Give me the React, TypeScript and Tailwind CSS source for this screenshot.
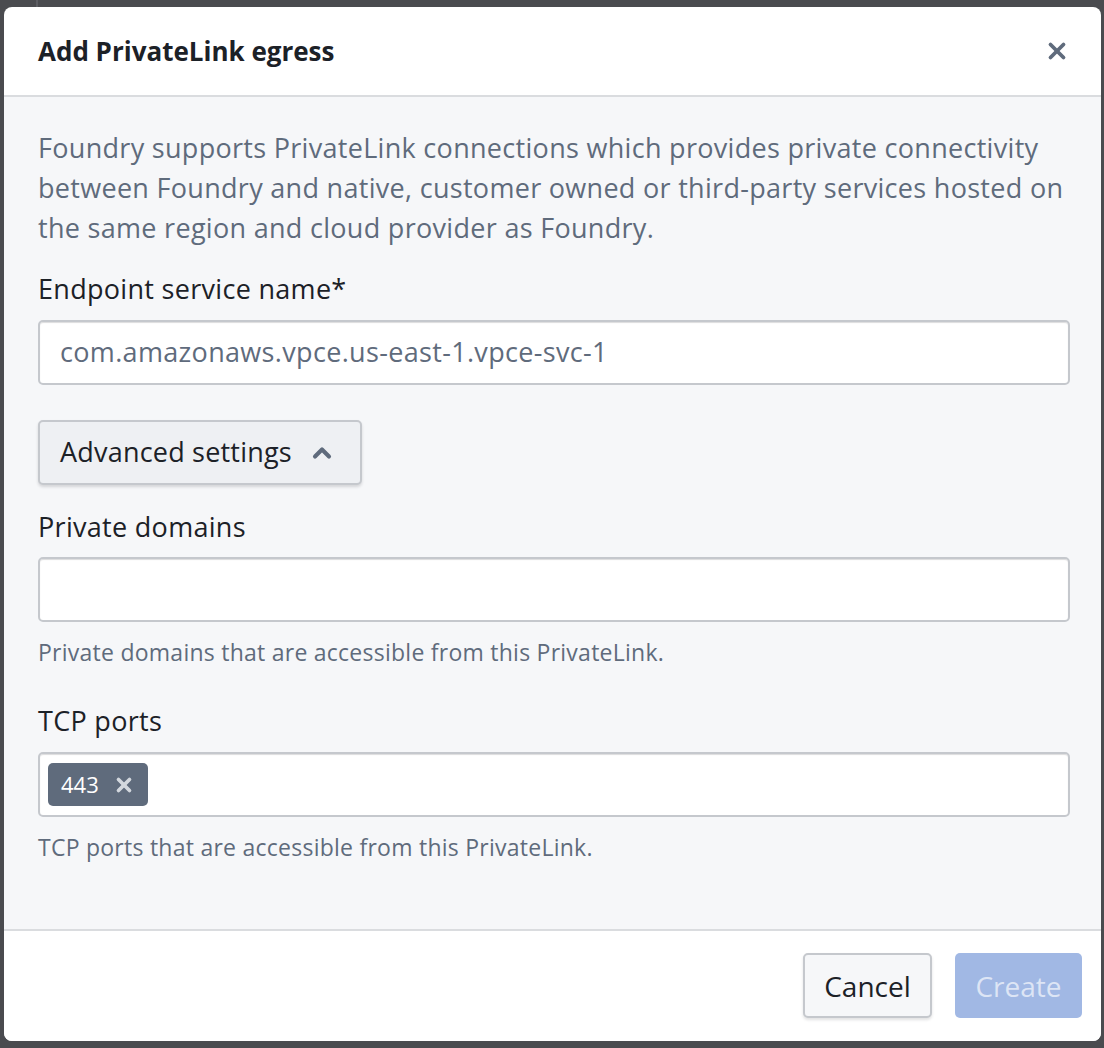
/* Add PrivateLink egress dialog */
import { ChevronUp, X } from "lucide-react";

const font = { fontFamily: "'Open Sans', 'Noto Sans', sans-serif" };

function Label({ children }: { children: React.ReactNode }) {
  return <div className="text-[27px] leading-[40px] tracking-[0.3px] text-[#1c2127]">{children}</div>;
}

function Helper({ children }: { children: React.ReactNode }) {
  return <div className="mt-[15px] text-[23px] leading-[30px] tracking-[0.25px] text-[#5f6b7c]">{children}</div>;
}

const inputBox =
  "h-[65px] w-full rounded-[5px] border-2 border-[#c5c8cd] bg-white shadow-[inset_0_1px_1px_rgba(17,20,24,0.15)]";

export default function App() {
  return (
    <div className="relative h-[1048px] w-[1104px] overflow-hidden bg-[#4a4b4f]" style={font}>
      <div className="absolute left-[36px] top-0 h-[10px] w-[2px] bg-[#5c5d62]" />
      <div className="relative ml-[4px] mt-[7px] flex h-[1034px] w-[1097px] flex-col overflow-hidden rounded-[8px] bg-white">
        <div className="flex h-[90px] shrink-0 items-center justify-between border-b-2 border-[#dadcdf] pl-[34px] pr-[31px]">
          <h1 className="text-[26px] font-bold text-[#1c2127]">Add PrivateLink egress</h1>
          <X size={26} strokeWidth={3.5} className="text-[#5f6b7c]" />
        </div>

        <div className="flex-1 bg-[#f6f7f9] pl-[34px] pr-[31px] pt-[31px]">
          <p className="text-[27px] leading-[40px] tracking-[0.3px] text-[#5f6b7c]">
            Foundry supports PrivateLink connections which provides private connectivity between Foundry and
            native, customer owned or third-party services hosted on the same region and cloud provider as Foundry.
          </p>

          <div className="mt-[21px]">
            <Label>Endpoint service name*</Label>
            <div
              className={`${inputBox} mt-[11px] flex items-center px-[20px] text-[27px] tracking-[0.33px] text-[#5f6b7c]`}
            >
              com.amazonaws.vpce.us-east-1.vpce-svc-1
            </div>
          </div>

          <button className="mt-[35px] flex h-[65px] items-center gap-[16px] whitespace-nowrap rounded-[5px] border-2 border-[#c5c8cd] bg-[#eef0f3] pl-[20px] pr-[24px] text-[27px] tracking-[0.2px] text-[#1c2127] shadow-[0_2px_3px_rgba(17,20,24,0.15)]">
            Advanced settings
            <ChevronUp size={28} strokeWidth={3.5} className="text-[#5f6b7c]" />
          </button>

          <div className="mt-[22px]">
            <Label>Private domains</Label>
            <div className={`${inputBox} mt-[10px]`} />
            <Helper>Private domains that are accessible from this PrivateLink.</Helper>
          </div>

          <div className="mt-[34px]">
            <Label>TCP ports</Label>
            <div className={`${inputBox} mt-[11px] flex items-center px-[8px]`}>
              <span className="flex h-[43px] items-center gap-[14px] rounded-[5px] bg-[#5f6b7c] pl-[13px] pr-[13px] text-[22px] font-medium text-white">
                443
                <X size={22} strokeWidth={4} className="text-[#d3d8de]" />
              </span>
            </div>
            <Helper>TCP ports that are accessible from this PrivateLink.</Helper>
          </div>
        </div>

        <div className="flex h-[112px] shrink-0 items-start justify-end gap-[23px] border-t-2 border-[#dadcdf] bg-white pr-[19px] pt-[22px]">
          <button className="h-[65px] w-[129px] rounded-[5px] border-2 border-[#c5c8cd] bg-[#f6f7f9] text-[28px] text-[#1c2127] shadow-[0_2px_3px_rgba(17,20,24,0.12)]">
            Cancel
          </button>
          <button className="h-[65px] w-[127px] rounded-[5px] bg-[#a1b8e4] text-[28px] text-[#dde5f5]">
            Create
          </button>
        </div>
      </div>
    </div>
  );
}
